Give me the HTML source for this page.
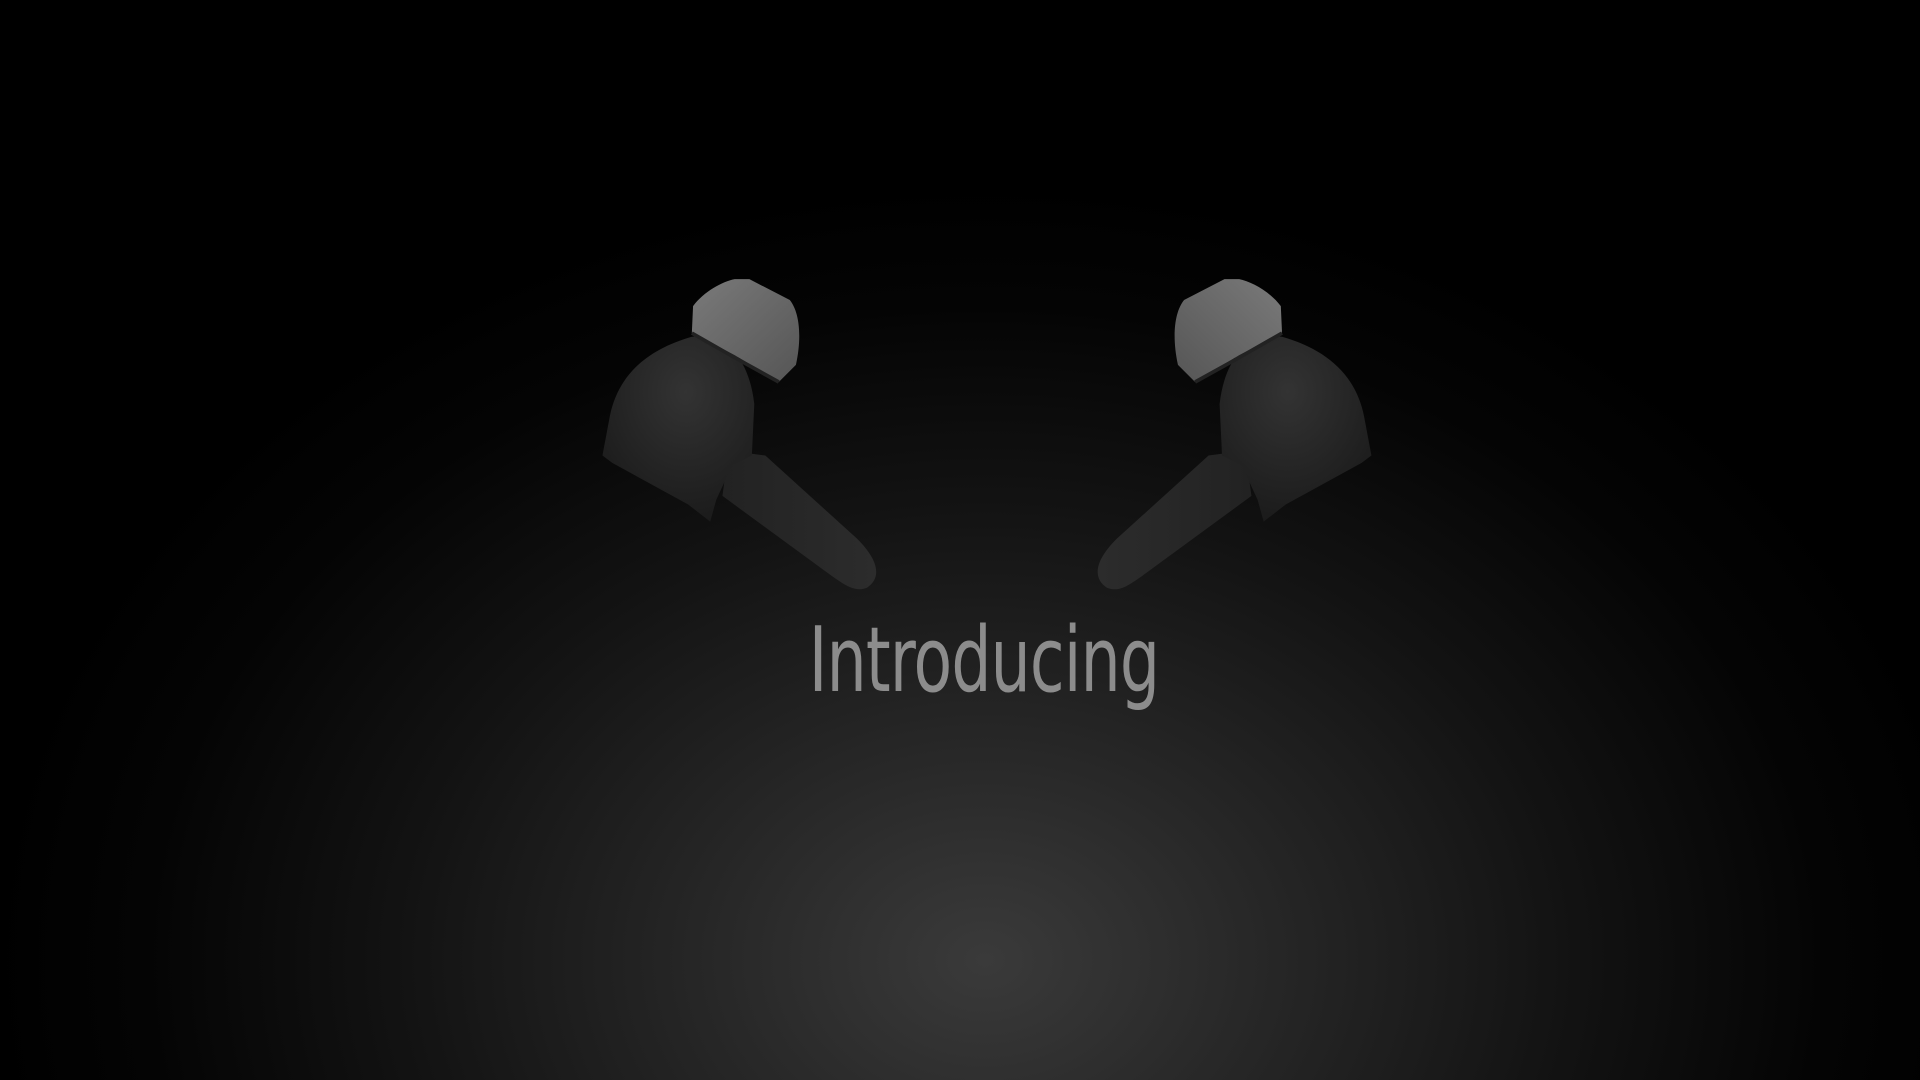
<!DOCTYPE html>
<html><head><style>
html,body{margin:0;padding:0;width:1920px;height:1080px;overflow:hidden;background:#000}
.bg{position:absolute;inset:0;background:radial-gradient(ellipse 1050px 820px at 985px 960px,#3a3a3a 0%,#282828 25%,#131313 55%,#040404 80%,#000 95%)}
svg{position:absolute;left:0;top:0}
.t{position:absolute;left:24px;width:1920px;top:608px;text-align:center;font-family:"DejaVu Sans Condensed","Liberation Sans Narrow","DejaVu Sans",sans-serif;font-size:90px;color:#8c8c8c;letter-spacing:-1px;transform:scaleX(0.78);}
</style></head><body>
<div class="bg"></div>
<svg width="1920" height="1080" viewBox="0 0 1568 882">
<defs>
<linearGradient id="tip" x1="0" y1="0" x2="1" y2="1"><stop offset="0" stop-color="#7a7a7a"/><stop offset="1" stop-color="#555"/></linearGradient>
<radialGradient id="body" cx="0.55" cy="0.3" r="0.8"><stop offset="0" stop-color="#333"/><stop offset="1" stop-color="#181818"/></radialGradient>
<linearGradient id="stem" x1="0" y1="0" x2="1" y2="0"><stop offset="0" stop-color="#222"/><stop offset="1" stop-color="#2c2c2c"/></linearGradient>
<g id="bud">
<path d="M595,368 L625,372 L700,440 C718,458 720,472 708,480 C698,484 690,478 676,468 L590,405 Z" fill="url(#stem)"/>
<path d="M498,340 C505,305 530,285 565,275 C595,272 612,295 616,330 L614,372 L598,380 L585,408 L580,426 L562,412 L500,378 L492,372 Z" fill="url(#body)"/>
<path d="M566,250 C575,238 590,230 600,228 L612,228 L645,245 C653,255 655,275 650,298 L636,312 L600,290 L565,272 Z" fill="url(#tip)"/>
<path d="M565,272 L600,292 L636,312" stroke="#222" stroke-width="3" fill="none"/>
</g>
</defs>
<use href="#bud"/>
<use href="#bud" transform="translate(1612,0) scale(-1,1)"/>
</svg>
<div class="t">Introducing</div>
</body></html>
